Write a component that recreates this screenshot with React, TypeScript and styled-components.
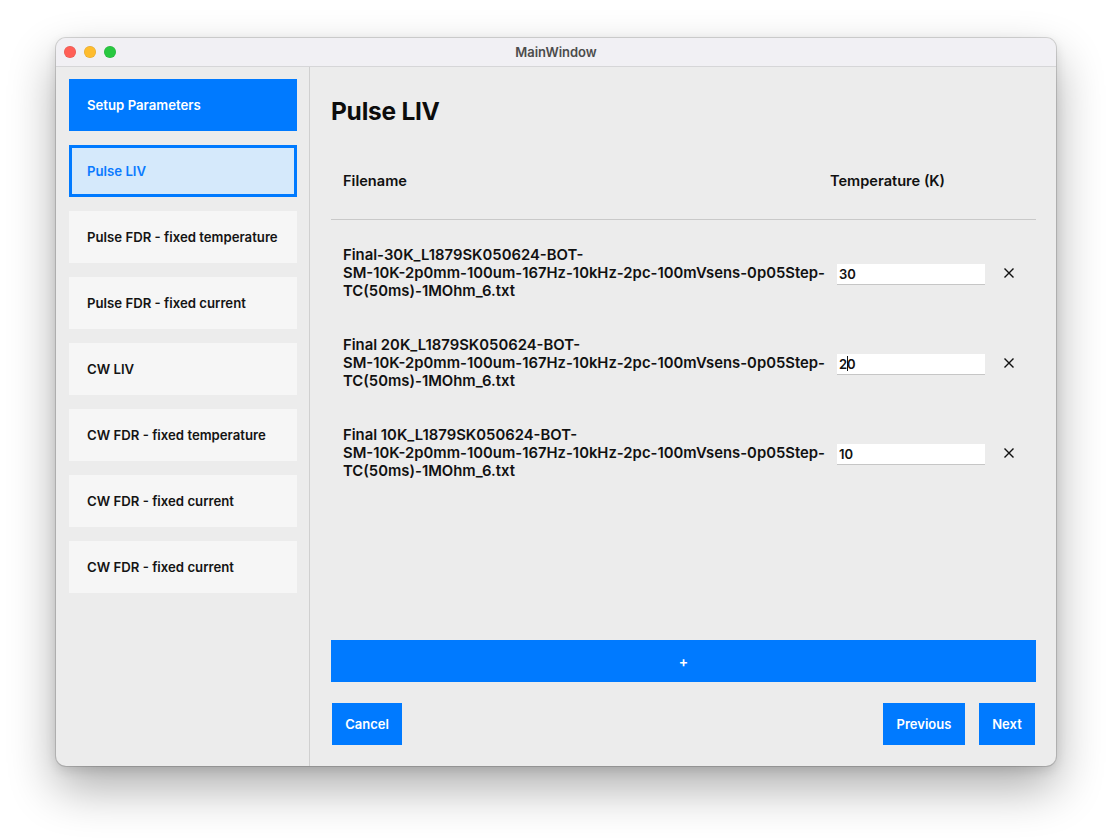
import React from "react";
import styled, { createGlobalStyle } from "styled-components";

const GlobalStyle = createGlobalStyle`
  html, body { margin: 0; padding: 0; background: #ffffff; }
  body { font-family: Inter, "Noto Sans", "Liberation Sans", sans-serif; -webkit-font-smoothing: antialiased; }
  * { box-sizing: border-box; }
`;

const Stage = styled.div`
  width: 1112px;
  height: 840px;
  padding: 38px 0 0 56px;
`;

const Window = styled.div`
  width: 1000px;
  height: 728px;
  border-radius: 10px;
  overflow: hidden;
  display: flex;
  flex-direction: column;
  background: #ececec;
  box-shadow: 0 0 0 1px rgba(0, 0, 0, 0.14), 0 22px 48px rgba(0, 0, 0, 0.32), 0 4px 12px rgba(0, 0, 0, 0.12);
`;

const TitleBar = styled.div`
  height: 29px;
  flex: none;
  display: grid;
  grid-template-columns: 1fr auto 1fr;
  align-items: center;
  background: #f1f0f4;
  border-bottom: 1px solid #d6d6d8;
  padding: 0 8px;
`;

const Lights = styled.div`
  display: flex;
  gap: 8px;
`;

const Light = styled.span<{ $c: string }>`
  width: 12px;
  height: 12px;
  border-radius: 50%;
  background: ${(p) => p.$c};
  box-shadow: inset 0 0 0 0.5px rgba(0, 0, 0, 0.12);
`;

const WinTitle = styled.div`
  font-size: 13px;
  font-weight: 600;
  color: #4c4c4c;
`;

const Body = styled.div`
  flex: 1;
  display: flex;
  min-height: 0;
`;

const Sidebar = styled.nav`
  width: 254px;
  flex: none;
  border-right: 1px solid #d0d0d0;
  padding: 12px 12px 0 13px;
  display: flex;
  flex-direction: column;
  gap: 14px;
`;

const NavItem = styled.div<{ $variant: "header" | "active" | "normal" }>`
  height: 52px;
  display: flex;
  align-items: center;
  padding-left: 18px;
  font-size: 13.2px;
  font-weight: 600;
  background: ${(p) => (p.$variant === "header" ? "#007aff" : p.$variant === "active" ? "#d5e9fb" : "#f6f6f6")};
  color: ${(p) => (p.$variant === "header" ? "#ffffff" : p.$variant === "active" ? "#0a7aff" : "#141414")};
  border: ${(p) => (p.$variant === "active" ? "3px solid #007aff" : "none")};
  ${(p) => (p.$variant === "active" ? "padding-left: 15px;" : "")}
`;

const Main = styled.main`
  flex: 1;
  display: flex;
  flex-direction: column;
  padding: 29px 20px 21px 21px;
  min-width: 0;
`;

const PageTitle = styled.h1`
  margin: 0;
  font-size: 24.5px;
  line-height: 30px;
  font-weight: 700;
  color: #0c0c0c;
  letter-spacing: -0.25px;
`;

const HeaderRow = styled.div`
  display: grid;
  grid-template-columns: 487px 1fr;
  align-items: center;
  height: 40px;
  margin-top: 35px;
  margin-bottom: 18px;
  padding-left: 12px;
  font-size: 14.6px;
  font-weight: 600;
  color: #111111;
`;

const Divider = styled.div`
  height: 1px;
  background: #c9c9c9;
`;

const Rows = styled.div`
  display: flex;
  flex-direction: column;
  padding-top: 8px;
  flex: 1;
`;

const Row = styled.div`
  height: 90px;
  display: grid;
  grid-template-columns: 475px 148px 10px;
  column-gap: 19px;
  align-items: center;
  padding-left: 12px;
`;

const FileName = styled.div`
  font-size: 14.85px;
  line-height: 18px;
  font-weight: 600;
  color: #111111;
  white-space: nowrap;
`;

const FieldWrap = styled.div`
  position: relative;
  height: 21px;
`;

const Field = styled.input`
  width: 148px;
  height: 21px;
  border: none;
  border-bottom: 1px solid #c6c6c6;
  background: #ffffff;
  padding: 0 2px;
  font-family: inherit;
  font-size: 13px;
  font-weight: 600;
  color: #111111;
  outline: none;
`;

const Caret = styled.span<{ $left: number }>`
  position: absolute;
  top: 3px;
  left: ${(p) => p.$left}px;
  width: 1px;
  height: 15px;
  background: #111111;
`;

const RemoveButton = styled.button`
  width: 10px;
  height: 14px;
  padding: 0;
  border: none;
  background: transparent;
  display: flex;
  align-items: center;
  justify-content: center;
  cursor: pointer;
`;

const AddButton = styled.button`
  height: 42px;
  width: 100%;
  border: none;
  background: #007aff;
  color: #ffffff;
  font-family: inherit;
  font-size: 14px;
  font-weight: 600;
  cursor: pointer;
`;

const Footer = styled.div`
  display: flex;
  align-items: center;
  margin-top: 21px;
  gap: 14px;
  padding-left: 1px;
  padding-right: 1px;
`;

const Spacer = styled.div`
  flex: 1;
`;

const ActionButton = styled.button<{ $w: number }>`
  height: 42px;
  width: ${(p) => p.$w}px;
  border: none;
  background: #007aff;
  color: #ffffff;
  font-family: inherit;
  font-size: 13px;
  font-weight: 600;
  cursor: pointer;
`;

const navItems: { label: string; variant: "header" | "active" | "normal" }[] = [
  { label: "Setup Parameters", variant: "header" },
  { label: "Pulse LIV", variant: "active" },
  { label: "Pulse FDR - fixed temperature", variant: "normal" },
  { label: "Pulse FDR - fixed current", variant: "normal" },
  { label: "CW LIV", variant: "normal" },
  { label: "CW FDR - fixed temperature", variant: "normal" },
  { label: "CW FDR - fixed current", variant: "normal" },
  { label: "CW FDR - fixed current", variant: "normal" },
];

const files = [
  {
    lines: ["Final-30K_L1879SK050624-BOT-", "SM-10K-2p0mm-100um-167Hz-10kHz-2pc-100mVsens-0p05Step-", "TC(50ms)-1MOhm_6.txt"],
    temp: "30",
    caret: false,
  },
  {
    lines: ["Final 20K_L1879SK050624-BOT-", "SM-10K-2p0mm-100um-167Hz-10kHz-2pc-100mVsens-0p05Step-", "TC(50ms)-1MOhm_6.txt"],
    temp: "20",
    caret: true,
  },
  {
    lines: ["Final 10K_L1879SK050624-BOT-", "SM-10K-2p0mm-100um-167Hz-10kHz-2pc-100mVsens-0p05Step-", "TC(50ms)-1MOhm_6.txt"],
    temp: "10",
    caret: false,
  },
];

const CloseIcon = () => (
  <svg width="10" height="10" viewBox="0 0 10 10">
    <path d="M1 1 L9 9 M9 1 L1 9" stroke="#111" strokeWidth="1.4" strokeLinecap="square" />
  </svg>
);

export default function App() {
  return (
    <>
      <GlobalStyle />
      <Stage>
        <Window>
          <TitleBar>
            <Lights>
              <Light $c="#ff5f57" />
              <Light $c="#febc2e" />
              <Light $c="#28c840" />
            </Lights>
            <WinTitle>MainWindow</WinTitle>
            <div />
          </TitleBar>
          <Body>
            <Sidebar>
              {navItems.map((n, i) => (
                <NavItem key={i} $variant={n.variant}>
                  {n.label}
                </NavItem>
              ))}
            </Sidebar>
            <Main>
              <PageTitle>Pulse LIV</PageTitle>
              <HeaderRow>
                <span>Filename</span>
                <span>Temperature (K)</span>
              </HeaderRow>
              <Divider />
              <Rows>
                {files.map((f, i) => (
                  <Row key={i}>
                    <FileName>
                      {f.lines.map((l, j) => (
                        <React.Fragment key={j}>
                          {l}
                          {j < f.lines.length - 1 && <br />}
                        </React.Fragment>
                      ))}
                    </FileName>
                    <FieldWrap>
                      <Field defaultValue={f.temp} />
                      {f.caret && <Caret $left={10} />}
                    </FieldWrap>
                    <RemoveButton aria-label="remove">
                      <CloseIcon />
                    </RemoveButton>
                  </Row>
                ))}
              </Rows>
              <AddButton>+</AddButton>
              <Footer>
                <ActionButton $w={70}>Cancel</ActionButton>
                <Spacer />
                <ActionButton $w={82}>Previous</ActionButton>
                <ActionButton $w={56}>Next</ActionButton>
              </Footer>
            </Main>
          </Body>
        </Window>
      </Stage>
    </>
  );
}
